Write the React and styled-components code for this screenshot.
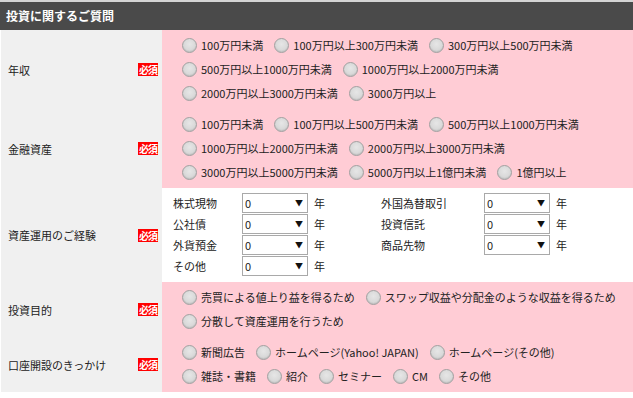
import React from 'react'
import styled, { createGlobalStyle } from 'styled-components'

const GlobalStyle = createGlobalStyle`
  body {
    margin: 0;
    background: #ffffff;
    font-family: "Noto Sans CJK JP", "Noto Sans", sans-serif;
    font-size: 11px;
    color: #222;
  }
`

const Wrap = styled.div`
  width: 633px;
  border-top: 2px solid #d4d4d4;
  background: #ffffff;
`

const Header = styled.h2`
  margin: 0;
  height: 28px;
  line-height: 27px;
  padding-left: 6px;
  background: #4a4a4a;
  color: #ffffff;
  font-size: 12px;
  font-weight: bold;
`

const Table = styled.div`
  display: flex;
  flex-direction: column;
  padding-left: 1px;
`

const Row = styled.div`
  display: flex;
  align-items: stretch;
`

const Label = styled.div`
  width: 161px;
  flex: none;
  background: #f0f0f0;
  display: flex;
  align-items: center;
  justify-content: space-between;
  padding: 0 4px 0 7px;
  box-sizing: border-box;
`

const Badge = styled.span`
  display: inline-block;
  width: 20px;
  height: 13px;
  line-height: 13px;
  background: #ff0000;
  color: #ffffff;
  font-size: 10px;
  font-weight: bold;
  text-align: center;
  letter-spacing: -1px;
`

const Cell = styled.div`
  flex: 1;
  background: ${p => (p.$white ? '#ffffff' : '#ffccd5')};
  padding: ${p => (p.$white ? '5px 0 6px 11px' : '3px 0 4px 20px')};
`

const Line = styled.div`
  display: flex;
  align-items: center;
  height: 24px;
  white-space: nowrap;
`

const Option = styled.label`
  display: inline-flex;
  align-items: center;
  margin-right: 11px;
`

const Radio = styled.input.attrs({ type: 'radio' })`
  appearance: none;
  margin: 0 4px 0 0;
  width: 15px;
  height: 15px;
  border-radius: 50%;
  border: 1px solid #a0a0a0;
  box-sizing: border-box;
  background: radial-gradient(circle at 50% 40%, #e6e6e6 0%, #d8d8d8 60%, #c6c6c6 100%);
  box-shadow: inset 0 -1px 1px rgba(0, 0, 0, 0.08);
`

const ExpGrid = styled.div`
  display: grid;
  grid-template-columns: 69px 66px 73px 103px 66px auto;
  grid-auto-rows: 20px;
  row-gap: 1px;
  align-items: center;
`

const SelectBox = styled.div`
  position: relative;
  width: 66px;
  height: 20px;
`

const Select = styled.select`
  appearance: none;
  width: 100%;
  height: 100%;
  border: 1px solid #a9a9a9;
  background: #ffffff;
  font-family: inherit;
  font-size: 11px;
  color: #222;
  padding: 0 0 0 2px;
  margin: 0;
`

const Arrow = styled.span`
  position: absolute;
  right: 5px;
  top: 4px;
  font-size: 8px;
  color: #111;
  pointer-events: none;
`

const Year = styled.span`
  padding-left: 6px;
`

const RadioRow = ({ name, lines }) => (
  <Cell>
    {lines.map((line, i) => (
      <Line key={i}>
        {line.map(o => (
          <Option key={o}>
            <Radio name={name} />
            {o}
          </Option>
        ))}
      </Line>
    ))}
  </Cell>
)

const Exp = ({ label }) => (
  <>
    <span>{label}</span>
    <SelectBox>
      <Select defaultValue="0">
        <option value="0">0</option>
      </Select>
      <Arrow>▼</Arrow>
    </SelectBox>
    <Year>年</Year>
  </>
)

const income = [
  ['100万円未満', '100万円以上300万円未満', '300万円以上500万円未満'],
  ['500万円以上1000万円未満', '1000万円以上2000万円未満'],
  ['2000万円以上3000万円未満', '3000万円以上'],
]

const assets = [
  ['100万円未満', '100万円以上500万円未満', '500万円以上1000万円未満'],
  ['1000万円以上2000万円未満', '2000万円以上3000万円未満'],
  ['3000万円以上5000万円未満', '5000万円以上1億円未満', '1億円以上'],
]

const purpose = [
  ['売買による値上り益を得るため', 'スワップ収益や分配金のような収益を得るため'],
  ['分散して資産運用を行うため'],
]

const trigger = [
  ['新聞広告', 'ホームページ(Yahoo! JAPAN)', 'ホームページ(その他)'],
  ['雑誌・書籍', '紹介', 'セミナー', 'CM', 'その他'],
]

export default function App() {
  return (
    <Wrap>
      <GlobalStyle />
      <Header>投資に関するご質問</Header>
      <Table>
        <Row>
          <Label>年収<Badge>必須</Badge></Label>
          <RadioRow name="income" lines={income} />
        </Row>
        <Row>
          <Label>金融資産<Badge>必須</Badge></Label>
          <RadioRow name="assets" lines={assets} />
        </Row>
        <Row>
          <Label>資産運用のご経験<Badge>必須</Badge></Label>
          <Cell $white>
            <ExpGrid>
              <Exp label="株式現物" />
              <Exp label="外国為替取引" />
              <Exp label="公社債" />
              <Exp label="投資信託" />
              <Exp label="外貨預金" />
              <Exp label="商品先物" />
              <Exp label="その他" />
            </ExpGrid>
          </Cell>
        </Row>
        <Row>
          <Label>投資目的<Badge>必須</Badge></Label>
          <RadioRow name="purpose" lines={purpose} />
        </Row>
        <Row>
          <Label>口座開設のきっかけ<Badge>必須</Badge></Label>
          <RadioRow name="trigger" lines={trigger} />
        </Row>
      </Table>
    </Wrap>
  )
}
